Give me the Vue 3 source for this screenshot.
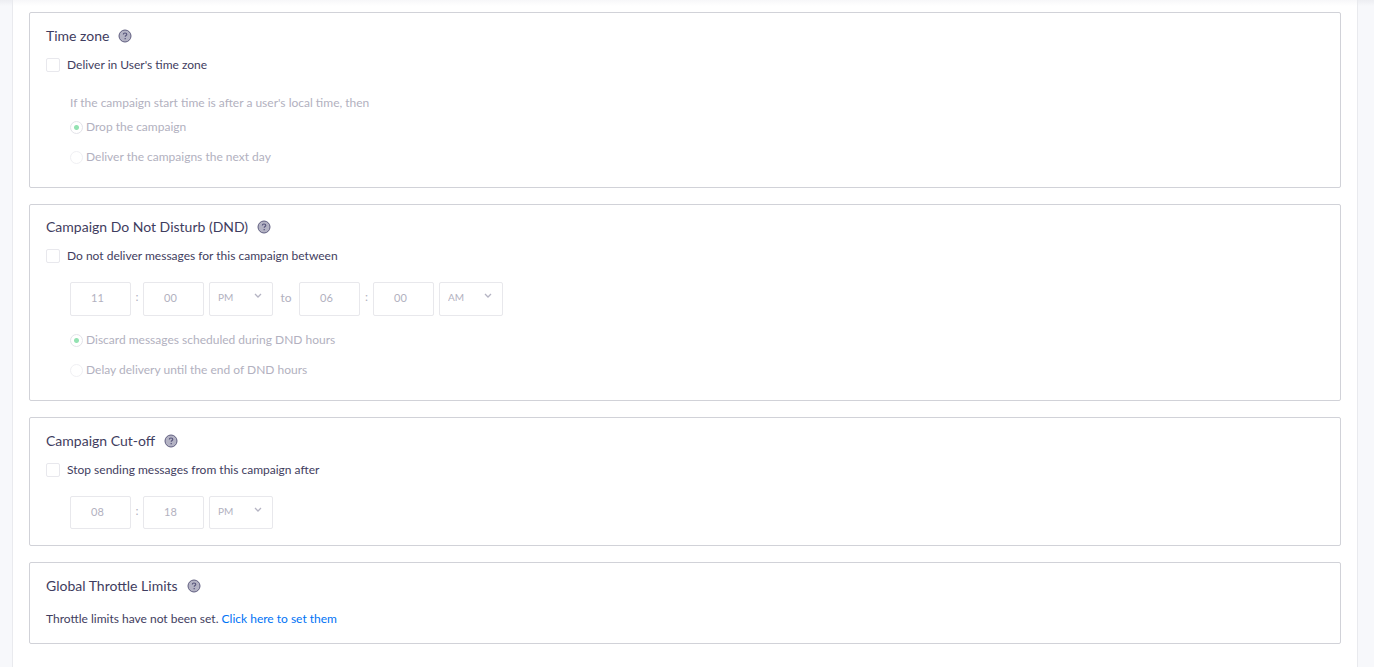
<script setup>
import { reactive } from 'vue'

const form = reactive({
  userZone: false,
  late: 'drop',
  dnd: false,
  dndMode: 'discard',
  cutoff: false,
})

const dndTimes = reactive([
  { name: 'Start', hour: '11', minute: '00', period: 'PM' },
  { name: 'End', hour: '06', minute: '00', period: 'AM' },
])
const cutoffTimes = reactive([{ name: 'Cut-off', hour: '08', minute: '18', period: 'PM' }])

const sections = [
  { id: 'zone', title: 'Time zone', key: 'userZone', label: "Deliver in User's time zone" },
  { id: 'dnd', title: 'Campaign Do Not Disturb (DND)', key: 'dnd', label: 'Do not deliver messages for this campaign between', times: dndTimes },
  { id: 'cutoff', title: 'Campaign Cut-off', key: 'cutoff', label: 'Stop sending messages from this campaign after', times: cutoffTimes },
  { id: 'throttle', title: 'Global Throttle Limits' },
]

const options = {
  zone: { model: 'late', items: [['drop', 'Drop the campaign'], ['next', 'Deliver the campaigns the next day']] },
  dnd: { model: 'dndMode', items: [['discard', 'Discard messages scheduled during DND hours'], ['delay', 'Delay delivery until the end of DND hours']] },
}
</script>

<template>
  <main class="page">
    <div class="panel">
      <section v-for="s in sections" :key="s.id" class="card" :class="s.id">
        <h2 class="title">
          {{ s.title }}
          <button type="button" class="help" :aria-label="'Help: ' + s.title">
            <svg viewBox="0 0 14 14" width="14" height="14" aria-hidden="true">
              <circle cx="7" cy="7" r="6" fill="#b4b3c4" stroke="#605e80" stroke-width="1" />
              <path d="M5.3 5.6C5.3 4.5 6 4 7 4s1.8.5 1.8 1.4c0 1.1-1.6 1.1-1.6 2.4" fill="none" stroke="#55537a" stroke-width="1.1" />
              <path d="M6.6 9h1.2v1.2H6.6z" fill="#55537a" />
            </svg>
          </button>
        </h2>

        <label v-if="s.key" class="check">
          <input v-model="form[s.key]" type="checkbox" />
          <span>{{ s.label }}</span>
        </label>

        <fieldset v-if="s.key" class="details" :disabled="!form[s.key]" :aria-label="s.title">
          <p v-if="s.id === 'zone'" class="note">If the campaign start time is after a user's local time, then</p>

          <div v-if="s.times" class="times">
            <template v-for="(t, i) in s.times" :key="t.name">
              <span v-if="i" class="to">to</span>
              <input v-model="t.hour" class="num" type="text" :aria-label="t.name + ' hour'" />
              <span class="colon">:</span>
              <input v-model="t.minute" class="num" type="text" :aria-label="t.name + ' minute'" />
              <span class="period">
                <select v-model="t.period" :aria-label="t.name + ' period'">
                  <option>AM</option>
                  <option>PM</option>
                </select>
                <svg viewBox="0 0 8 6" width="8" height="6" aria-hidden="true">
                  <path d="M1 1l3 3 3-3" fill="none" stroke="#b5b4c3" stroke-width="1.3" />
                </svg>
              </span>
            </template>
          </div>

          <div v-if="options[s.id]" class="radios">
            <label v-for="[value, text] in options[s.id].items" :key="value" class="radio">
              <input v-model="form[options[s.id].model]" type="radio" :name="s.id" :value="value" />
              <span>{{ text }}</span>
            </label>
          </div>
        </fieldset>

        <p v-if="s.id === 'throttle'" class="limits">
          Throttle limits have not been set. <a href="#">Click here to set them</a>
        </p>
      </section>
    </div>
  </main>
</template>

<style>
body {
  background: #f7f8fb;
}
</style>

<style scoped>
.page {
  box-sizing: border-box;
  min-height: 100vh;
  display: flex;
  padding: 0 16px 0 12px;
  font: 12px/20px Lato, "Liberation Sans", sans-serif;
  color: #3f3d60;
  background: linear-gradient(rgba(40, 40, 70, 0.05), rgba(40, 40, 70, 0) 6px);
}
.panel {
  box-sizing: border-box;
  flex: 1;
  display: flex;
  flex-direction: column;
  gap: 16px;
  padding: 12px 16px 23px;
  border: 1px solid #e9eaee;
  border-width: 0 1px;
  background: linear-gradient(#f7f7f9, #fff 6px);
}
.card {
  padding: 13px 16px 20px;
  border: 1px solid #d1d2d8;
  border-radius: 2px;
}
.dnd {
  padding-top: 12px;
}
.cutoff {
  padding-bottom: 16px;
}
.throttle {
  padding-bottom: 14px;
}
.title {
  display: flex;
  align-items: center;
  gap: 9px;
  margin: 0;
  font-size: 14px;
  font-weight: 400;
  line-height: 20px;
}
.help {
  display: flex;
  padding: 0;
  border: 0;
  background: none;
}
.check {
  display: flex;
  align-items: center;
  gap: 7px;
  margin-top: 9px;
}
.check input {
  appearance: none;
  box-sizing: border-box;
  width: 14px;
  height: 14px;
  margin: 0;
  border: 1px solid #e8e8ed;
  border-radius: 2px;
  background: #fff;
}
.check input:checked {
  background: #2fcb72;
}
.details {
  min-width: 0;
  margin: 0;
  padding: 16px 0 0 24px;
  border: 0;
  color: #b2b1c0;
}
.zone .details {
  padding-top: 18px;
}
.note {
  margin: 0 0 4px;
}
.times {
  display: flex;
  align-items: center;
}
.num,
.period {
  box-sizing: border-box;
  height: 34px;
  border: 1px solid #e8e8ec;
  border-radius: 2px;
  background: #fff;
}
.cutoff .num,
.cutoff .period {
  height: 33px;
}
.num {
  width: 61px;
  padding: 0 6px 3px 0;
  font: inherit;
  font-size: 11px;
  text-align: center;
  color: inherit;
}
.colon {
  width: 12px;
  padding-bottom: 4px;
  text-align: center;
}
.to ~ .colon {
  width: 13px;
}
.period {
  position: relative;
  width: 64px;
  margin-left: 5px;
}
.period select {
  appearance: none;
  width: 100%;
  height: 100%;
  padding: 0 8px 4px;
  border: 0;
  background: none;
  font: inherit;
  font-size: 10px;
  color: inherit;
  opacity: 1;
}
.period svg {
  position: absolute;
  top: 10px;
  right: 10px;
  pointer-events: none;
}
.to {
  width: 26px;
  padding-bottom: 2px;
  text-align: center;
}
.radios {
  display: flex;
  flex-direction: column;
  gap: 10px;
}
.times + .radios {
  margin-top: 14px;
}
.radio {
  display: flex;
  align-items: center;
  gap: 3px;
}
.radio input {
  appearance: none;
  box-sizing: border-box;
  width: 13px;
  height: 13px;
  margin: 0;
  border: 1px solid #f0f0f3;
  border-radius: 50%;
}
.radio input:checked {
  border-color: #e3e3e9;
  background: radial-gradient(circle, #94e2b2 2px, #fff 3px);
}
.limits {
  margin: 13px 0 0;
}
.limits a {
  color: #0073f5;
  text-decoration: none;
}
</style>
